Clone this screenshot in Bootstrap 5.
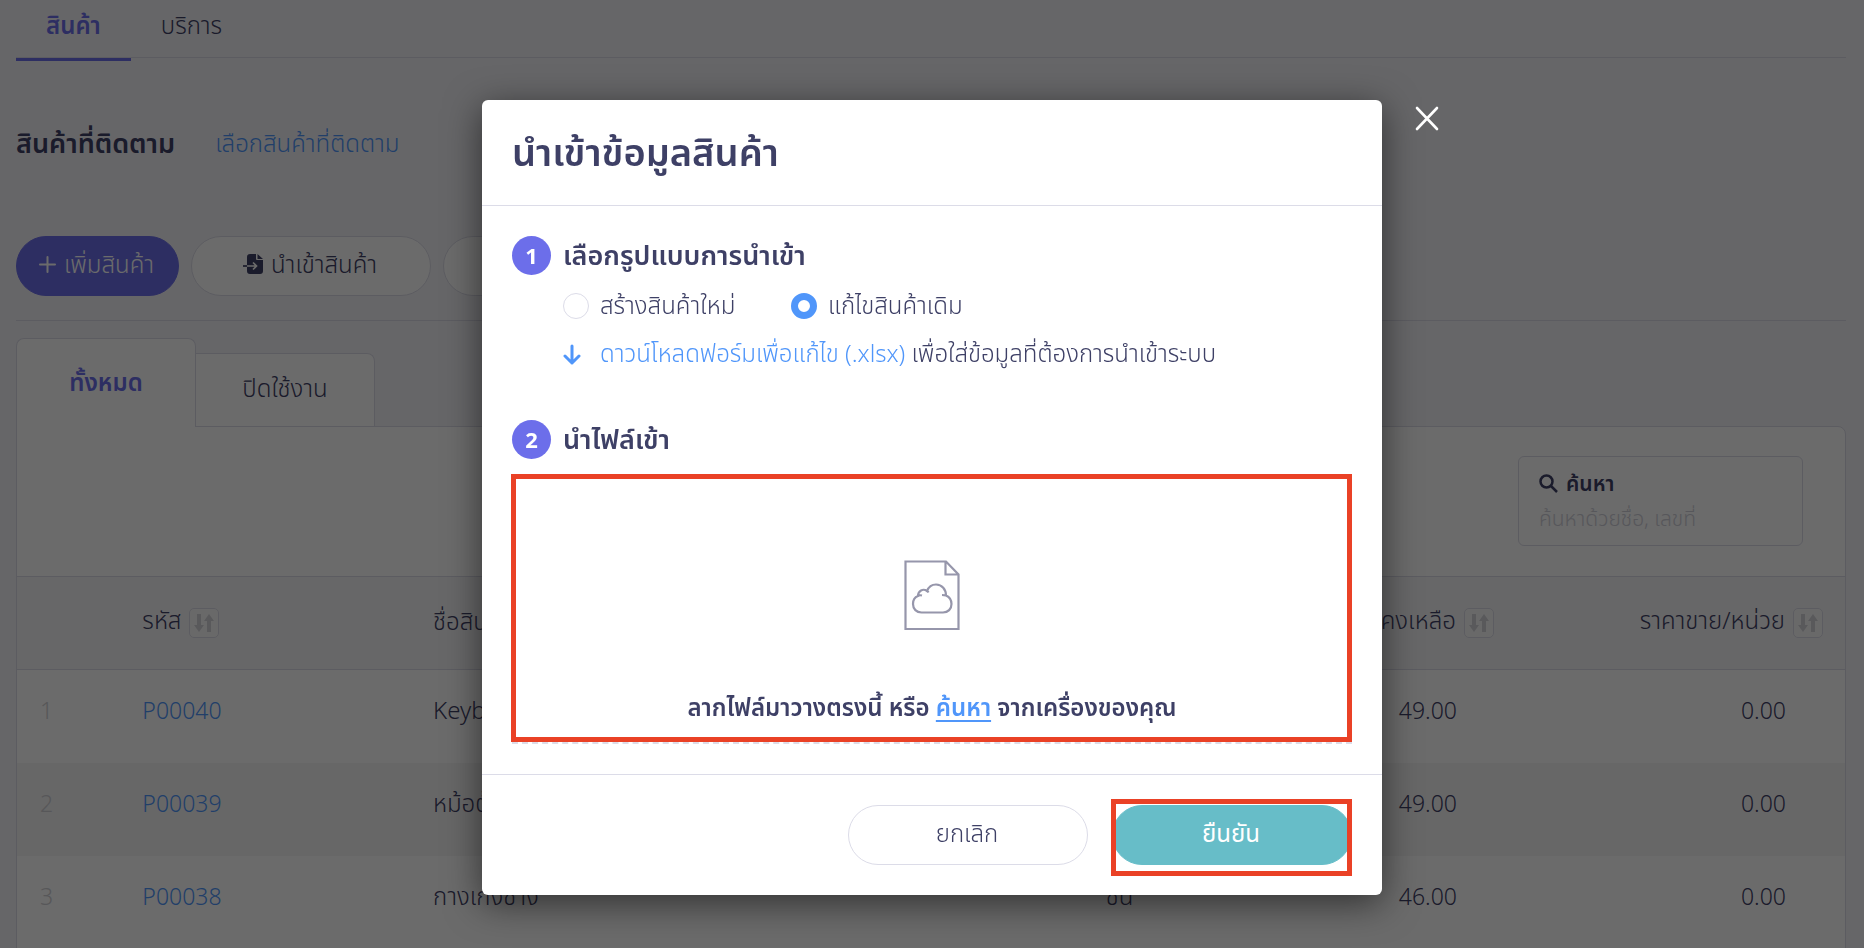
<!DOCTYPE html>
<html lang="th">
<head>
<meta charset="utf-8">
<meta name="viewport" content="width=device-width, initial-scale=1">
<title>นำเข้าข้อมูลสินค้า</title>
<link href="https://cdn.jsdelivr.net/npm/bootstrap@5.3.0/dist/css/bootstrap.min.css" rel="stylesheet">
<style>
:root { --ink: #3e4066; --violet: #6c6eea; --sky: #5096fa; --line: #dcdce8; --red: #ea4126; }
body { font-family: "Noto Sans", "Noto Sans Thai", sans-serif; font-size: 24px; line-height: 32px; font-weight: 300; color: var(--ink); background: #f4f4f8; }
a { color: var(--sky); text-decoration: none; }
.fw-mid { font-weight: 600; }

/* page */
.page-wrap { padding: 0 18px 0 16px; }
.top-tabs { height: 58px; border-bottom: 1px solid var(--line); }
.top-tabs a { color: var(--ink); padding: 9px 30px 0; height: 61px; }
.top-tabs a.active { color: var(--violet); border-bottom: 3px solid var(--violet); font-weight: 600; }
.follow-row { padding: 69px 0 0; height: 178px; gap: 40px; }
.follow-title { font-size: 27px; font-weight: 600; }
.pill-btn { height: 60px; border-radius: 30px; border: 1px solid var(--line); background: #fff; color: var(--ink); min-width: 240px; font-size: 24px; font-weight: 300; line-height: 32px; padding: 0 8px 4px 6px; }
.pill-btn.pill-add { background: var(--violet); border-color: var(--violet); color: #fff; min-width: 163px; }
.pill-btn.pill-ok { background: #67bdc8; border-color: #67bdc8; color: #fff; font-weight: 400; }
.tool-row { gap: 12px; padding-bottom: 24px; border-bottom: 1px solid var(--line); }
.file-tabs { padding-top: 17px; }
.file-tabs a { width: 179px; height: 73px; background: #fff; border: 1px solid var(--line); border-left: 0; border-bottom: 0; border-radius: 0 8px 0 0; color: var(--ink); padding-top: 18px; text-align: center; }
.file-tabs a.active { width: 180px; height: 89px; margin-bottom: -1px; border-left: 1px solid var(--line); border-radius: 8px 8px 0 0; color: var(--violet); font-weight: 600; padding-top: 27px; position: relative; }
.list-panel { background: #fff; border: 1px solid var(--line); border-radius: 0 8px 0 0; }
.search-area { padding: 29px 42px 30px 0; }
.search-box { width: 285px; height: 90px; border: 1px solid var(--line); border-radius: 6px; padding: 10px 20px; }
.search-box label { font-size: 21px; }
.search-box input { border: 0; padding: 0; width: 100%; font-size: 21px; line-height: 36px; height: 38px; font-weight: 300; background: none; }
.search-box input::placeholder { color: #cfcfd9; }
.goods { width: 100%; table-layout: fixed; }
.goods th { height: 93px; background: #f6f6f8; border-top: 1px solid var(--line); border-bottom: 1px solid var(--line); font-weight: 300; padding: 0 23px 4px; white-space: nowrap; }
.goods td { height: 93px; padding: 0 23px 12px; white-space: nowrap; }
.goods tbody tr:nth-child(even) { background: #f6f6f6; }
.goods .num-col { padding-right: 59px; text-align: right; }
.goods th.num-col { padding-right: 22px; }
.goods .idx { color: #cfcfd4; }
.goods td.idx, .goods td.num-col, .goods td a { font-size: 23px; }
.sort-btn { width: 30px; height: 30px; border: 1px solid var(--line); border-radius: 5px; background: #fbfbfb; padding: 0; color: #d5d5da; margin-left: 8px; vertical-align: middle; display: inline-flex; align-items: center; justify-content: center; }

/* dialog */
.modal-backdrop.show { opacity: .58; }
.import-dialog { max-width: 900px; margin-top: 100px; }
.import-dialog .modal-content { border: 0; border-radius: 6px; color: var(--ink); box-shadow: 0 8px 36px rgba(0,0,0,.55); }
.import-dialog .modal-header { height: 106px; padding: 0 30px 4px; border-color: var(--line); }
.import-dialog .modal-title { font-size: 38px; line-height: 48px; font-weight: 600; }
.import-dialog .modal-body { padding: 30px; }
.import-dialog .modal-footer { padding: 30px; gap: 24px; border-color: var(--line); }
.import-dialog .modal-footer > * { margin: 0; }
.step-no { width: 39px; height: 39px; border-radius: 50%; background: var(--violet); color: #fff; font-weight: 700; font-size: 22px; padding-bottom: 2px; }
.step-head { gap: 12px; height: 39px; }
.step-head h6 { font-size: 27px; line-height: 36px; font-weight: 600; margin: 0; padding-bottom: 2px; }
.step-rows { margin-left: 51px; }
.mode-list { padding-top: 14px; }
.mode-list .form-check { width: 228px; padding: 0; margin: 0; min-height: 32px; gap: 11px; }
.mode-list .form-check-input { width: 26px; height: 26px; margin: 0; float: none; border: 1px solid var(--line); }
.mode-list .form-check-input:checked { background: #fff; border: 7px solid var(--sky); }
.mode-list label, .form-line span { padding-bottom: 2px; }
.form-line { padding: 14px 0 49px; gap: 19px; }
.drop-zone { margin-top: 15px; height: 270px; border: 2px dashed var(--line); padding-top: 84px; gap: 60px; }
.drop-zone a { text-decoration: underline; text-underline-offset: 4px; }
.mark-wrap { position: relative; }
.mark-frame { position: absolute; border: 5px solid var(--red); pointer-events: none; }
.frame-zone { inset: 0 0 2px -1px; }
.frame-ok { inset: -6px 0 -11px -1px; }
.close-x { position: absolute; left: calc(100% + 33px); top: 6px; padding: 0; border: 0; background: none; line-height: 0; }
</style>
</head>
<body class="overflow-hidden">
<main class="page-wrap">
  <nav class="top-tabs d-flex">
    <a href="#" class="active">สินค้า</a>
    <a href="#">บริการ</a>
  </nav>
  <div class="follow-row d-flex align-items-start">
    <span class="follow-title">สินค้าที่ติดตาม</span>
    <a href="#">เลือกสินค้าที่ติดตาม</a>
  </div>
  <div class="tool-row d-flex">
    <button type="button" class="pill-btn pill-add d-flex align-items-center justify-content-center gap-2"><svg width="17" height="17" viewBox="0 0 17 17" stroke="currentColor" stroke-width="2" stroke-linecap="round"><path d="M8.500 1v15M1 8.500h15"/></svg>เพิ่มสินค้า</button>
    <button type="button" class="pill-btn d-flex align-items-center justify-content-center gap-2"><svg width="20" height="20" viewBox="0 0 20 20"><path fill="currentColor" d="M7 0h6v5a1 1 0 0 0 1 1h6v11a3 3 0 0 1-3 3H7a3 3 0 0 1-3-3V3a3 3 0 0 1 3-3zm7.500 0L20 5h-5.500z"/><path d="M4 12h9.500M10 8.500l3.500 3.500-3.500 3.500" fill="none" stroke="#fff" stroke-width="1.700"/><path d="M0 12h4" stroke="currentColor" stroke-width="1.700"/></svg>นำเข้าสินค้า</button>
    <button type="button" class="pill-btn">พิมพ์รายงาน</button>
  </div>
  <nav class="file-tabs d-flex align-items-end">
    <a href="#" class="active">ทั้งหมด</a>
    <a href="#">ปิดใช้งาน</a>
  </nav>
  <section class="list-panel">
    <div class="search-area d-flex justify-content-end">
      <div class="search-box">
        <label for="find" class="fw-mid d-flex align-items-center gap-2"><svg width="19" height="19" viewBox="0 0 19 19" fill="none" stroke="currentColor" stroke-width="2.500"><circle cx="7.500" cy="7.500" r="6"/><path d="M12 12l6 6"/></svg>ค้นหา</label>
        <input id="find" type="text" placeholder="ค้นหาด้วยชื่อ, เลขที่">
      </div>
    </div>
    <table class="goods">
      <colgroup><col style="width:5.600%"><col style="width:15.900%"><col style="width:36.800%"><col style="width:8.700%"><col style="width:15%"><col style="width:18%"></colgroup>
      <thead>
        <tr>
          <th></th>
          <th>รหัส<button type="button" class="sort-btn" aria-label="เรียง"><svg width="22" height="18" viewBox="0 0 22 18" fill="currentColor"><path d="M4 0h4v11h3l-5 7-5-7h3zM14 18h4V7h3l-5-7-5 7h3z"/></svg></button></th>
          <th>ชื่อสินค้า</th>
          <th>หน่วย</th>
          <th class="num-col">คงเหลือ<button type="button" class="sort-btn" aria-label="เรียง"><svg width="22" height="18" viewBox="0 0 22 18" fill="currentColor"><path d="M4 0h4v11h3l-5 7-5-7h3zM14 18h4V7h3l-5-7-5 7h3z"/></svg></button></th>
          <th class="num-col">ราคาขาย/หน่วย<button type="button" class="sort-btn" aria-label="เรียง"><svg width="22" height="18" viewBox="0 0 22 18" fill="currentColor"><path d="M4 0h4v11h3l-5 7-5-7h3zM14 18h4V7h3l-5-7-5 7h3z"/></svg></button></th>
        </tr>
      </thead>
      <tbody>
        <tr><td class="idx">1</td><td><a href="#">P00040</a></td><td>Keyboard</td><td>ชิ้น</td><td class="num-col">49.00</td><td class="num-col">0.00</td></tr>
        <tr><td class="idx">2</td><td><a href="#">P00039</a></td><td>หม้อต้ม</td><td>ชิ้น</td><td class="num-col">49.00</td><td class="num-col">0.00</td></tr>
        <tr><td class="idx">3</td><td><a href="#">P00038</a></td><td>กางเกงช้าง</td><td>ชิ้น</td><td class="num-col">46.00</td><td class="num-col">0.00</td></tr>
      </tbody>
    </table>
  </section>
</main>

<div class="modal-backdrop show"></div>
<div class="modal show d-block overflow-hidden" tabindex="-1" role="dialog" aria-labelledby="import-title">
  <div class="modal-dialog import-dialog">
    <div class="modal-content">
      <button type="button" class="close-x" aria-label="ปิด"><svg width="24" height="25" viewBox="0 0 24 25" stroke="#fff" stroke-width="2.600" stroke-linecap="round"><path d="M2 2l20 21M22 2L2 23"/></svg></button>
      <div class="modal-header"><h5 class="modal-title" id="import-title">นำเข้าข้อมูลสินค้า</h5></div>
      <div class="modal-body">
        <div class="step-head d-flex align-items-center">
          <span class="step-no d-flex align-items-center justify-content-center">1</span>
          <h6>เลือกรูปแบบการนำเข้า</h6>
        </div>
        <div class="step-rows">
          <div class="mode-list d-flex">
            <div class="form-check d-flex align-items-center"><input class="form-check-input" type="radio" name="mode" id="mode-new"><label for="mode-new">สร้างสินค้าใหม่</label></div>
            <div class="form-check d-flex align-items-center"><input class="form-check-input" type="radio" name="mode" id="mode-edit" checked><label for="mode-edit">แก้ไขสินค้าเดิม</label></div>
          </div>
          <div class="form-line d-flex align-items-center">
            <svg width="18" height="21" viewBox="0 0 18 21" fill="none" stroke="#5096fa" stroke-width="3" stroke-linecap="round" stroke-linejoin="round"><path d="M9 2v17M2 12l7 7 7-7"/></svg>
            <span><a href="#">ดาวน์โหลดฟอร์มเพื่อแก้ไข (.xlsx)</a> เพื่อใส่ข้อมูลที่ต้องการนำเข้าระบบ</span>
          </div>
        </div>
        <div class="step-head d-flex align-items-center">
          <span class="step-no d-flex align-items-center justify-content-center">2</span>
          <h6>นำไฟล์เข้า</h6>
        </div>
        <div class="mark-wrap">
          <div class="drop-zone d-flex flex-column align-items-center">
            <svg width="56" height="71" viewBox="0 0 56 71" fill="none" stroke="#9696ab" stroke-width="2.200"><path d="M1.500 1.500h40.500l12.500 13v54.500H1.500zM41.500 1.500v13h13"/><path d="M17.500 52.500c-5 0-8.500-3.500-8.500-8.500 0-4.500 2-7 5-8 0-5 5-8 9-5 2-5 6-6.500 9-6.500 6 0 10 5 10 11 3.500 1.500 5.500 4.500 5.500 8.500 0 5-3.500 8.500-8.500 8.500zM14 36c1-1 2-1 4-.5M22.500 30.500c1 .5 1.500 1 2 2M42 35.500c-1.500-.5-2.500-.5-4-.5"/></svg>
            <div class="fw-mid">ลากไฟล์มาวางตรงนี้ หรือ <a href="#">ค้นหา</a> จากเครื่องของคุณ</div>
          </div>
          <div class="mark-frame frame-zone"></div>
        </div>
      </div>
      <div class="modal-footer">
        <button type="button" class="pill-btn">ยกเลิก</button>
        <div class="mark-wrap"><button type="button" class="pill-btn pill-ok">ยืนยัน</button><div class="mark-frame frame-ok"></div></div>
      </div>
    </div>
  </div>
</div>
<script src="https://cdn.jsdelivr.net/npm/bootstrap@5.3.0/dist/js/bootstrap.bundle.min.js"></script>
</body>
</html>
